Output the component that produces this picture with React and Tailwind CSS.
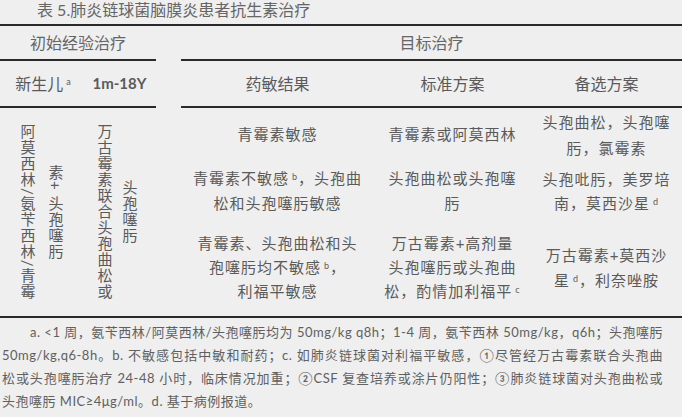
import React from 'react';

const sup = (t) => <sup className="ml-[3px] text-[9px]">{t}</sup>;

function Cell({ className = '', children }) {
  return (
    <div className={`flex items-center justify-center text-center ${className}`}>
      <div>{children}</div>
    </div>
  );
}

export default function App() {
  return (
    <div
      className="h-[417px] w-[682px] overflow-hidden bg-[#efefef] text-[#5a5a5a]"
      style={{ fontFamily: 'Lato, "Noto Sans CJK SC", sans-serif' }}
    >
      <div className="h-[24px] pl-[37px] text-[16px] leading-[20px] text-[#666]">表 5.肺炎链球菌脑膜炎患者抗生素治疗</div>

      <div className="grid grid-cols-[83px_73px_25px_193px_157px_151px] grid-rows-[35px_47px_54px_58px_96px] border-y-2 border-[#2a2a2a]">
        {/* header row 1 */}
        <Cell className="col-span-2 border-b-2 border-[#2a2a2a] text-[16px] text-[#666]">初始经验治疗</Cell>
        <div className="row-span-5" />
        <Cell className="col-span-3 border-b-2 border-[#2a2a2a] text-[16px] text-[#666]">目标治疗</Cell>

        {/* header row 2 */}
        <Cell className="border-b-2 border-[#2a2a2a] pl-[3px] text-[16px]">
          新生儿{sup('a')}
        </Cell>
        <Cell className="border-b-2 border-[#2a2a2a] text-[15px] font-bold">1m-18Y</Cell>
        <Cell className="border-b-2 border-[#2a2a2a] text-[16px]">药敏结果</Cell>
        <Cell className="border-b-2 border-[#2a2a2a] text-[16px]">标准方案</Cell>
        <Cell className="border-b-2 border-[#2a2a2a] text-[16px]">备选方案</Cell>

        {/* body */}
        <div className="row-span-3 flex items-center justify-center">
          <div className="text-center text-[15px] leading-[28px] tracking-[1px] [writing-mode:vertical-lr]">
            阿莫西林/氨苄西林/青霉
            <br />
            素+ 头孢噻肟
          </div>
        </div>
        <div className="row-span-3 flex items-center justify-center pr-[6px]">
          <div className="text-center text-[15px] leading-[25px] tracking-[1px] [writing-mode:vertical-lr]">
            万古霉素联合头孢曲松或
            <br />
            头孢噻肟
          </div>
        </div>

        <Cell className="pb-[2px] text-[15px] leading-[25px] tracking-[1px]">青霉素敏感</Cell>
        <Cell className="pb-[2px] text-[15px] leading-[25px] tracking-[1px]">青霉素或阿莫西林</Cell>
        <Cell className="text-[15px] leading-[26px] tracking-[1px]">
          头孢曲松，头孢噻
          <br />
          肟，氯霉素
        </Cell>

        <Cell className="text-[15px] leading-[25px] tracking-[1px]">
          青霉素不敏感{sup('b')}，头孢曲
          <br />
          松和头孢噻肟敏感
        </Cell>
        <Cell className="text-[15px] leading-[25px] tracking-[1px]">
          头孢曲松或头孢噻
          <br />
          肟
        </Cell>
        <Cell className="text-[15px] leading-[24px] tracking-[1px]">
          头孢吡肟，美罗培
          <br />
          南，莫西沙星{sup('d')}
        </Cell>

        <Cell className="pb-[2px] text-[15px] leading-[24px] tracking-[1px]">
          青霉素、头孢曲松和头
          <br />
          孢噻肟均不敏感{sup('b')}，
          <br />
          利福平敏感
        </Cell>
        <Cell className="pb-[2px] text-[15px] leading-[24px] tracking-[1px]">
          万古霉素+高剂量
          <br />
          头孢噻肟或头孢曲
          <br />
          松，酌情加利福平{sup('c')}
        </Cell>
        <Cell className="text-[15px] leading-[25px] tracking-[1px]">
          万古霉素+莫西沙
          <br />
          星{sup('d')}，利奈唑胺
        </Cell>
      </div>

      <div className="pt-[3px] pr-[19px] pl-[2px] text-[13px] leading-[23px] tracking-[0.5px] text-[#606060]">
        <div className="pl-[28px] text-justify [text-align-last:justify]">
          a. &lt;1 周，氨苄西林/阿莫西林/头孢噻肟均为 50mg/kg q8h；1-4 周，氨苄西林 50mg/kg，q6h；头孢噻肟
        </div>
        <div className="text-justify [text-align-last:justify]">
          50mg/kg,q6-8h。b. 不敏感包括中敏和耐药；c. 如肺炎链球菌对利福平敏感，①尽管经万古霉素联合头孢曲
        </div>
        <div className="text-justify [text-align-last:justify]">
          松或头孢噻肟治疗 24-48 小时，临床情况加重；②CSF 复查培养或涂片仍阳性；③肺炎链球菌对头孢曲松或
        </div>
        <div>头孢噻肟 MIC≥4μg/ml。d. 基于病例报道。</div>
      </div>
    </div>
  );
}
